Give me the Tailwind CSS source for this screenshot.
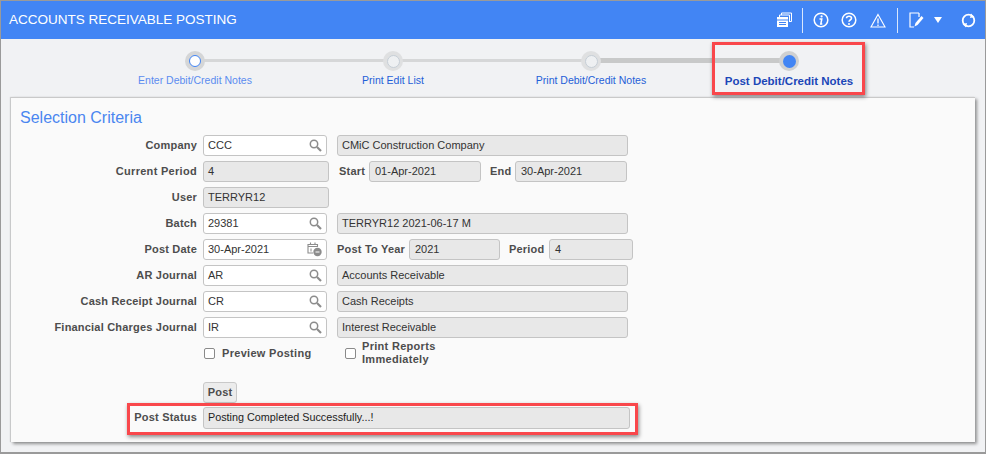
<!DOCTYPE html>
<html lang="en">
<head>
    <meta charset="UTF-8">
    <title>Accounts Receivable Posting</title>
    <script src="https://cdn.jsdelivr.net/npm/@tailwindcss/browser@4"></script>
</head>
<body class="w-[986px] h-[454px] overflow-hidden bg-[#f1f2f4] font-['Liberation_Sans',Arial,sans-serif] text-[11px] text-[#333]">
<div class="relative w-[986px] h-[454px] border border-[#9a9a9a] border-b-2">

    <!-- header -->
    <header class="h-[38px] bg-[#4285f4] flex items-center justify-between pl-[8px] pr-[9px] text-white">
        <h1 class="text-[13.5px] leading-none">ACCOUNTS RECEIVABLE POSTING</h1>
        <div class="flex items-center">
            <svg class="w-[17px] h-[16px]" viewBox="0 0 17 16" fill="none" stroke="white"><path d="M5.500 3V1h10v8.500h-2" stroke-width="1"/><path d="M3.500 5V3h10v7" stroke-width="1"/><rect x="1" y="5" width="11" height="10" fill="white" stroke="none"/><path d="M1 8h11M3 10.500h7M3 12.500h7" stroke="#4285f4"/></svg>
            <span class="w-px h-[25px] bg-white/80 ml-[9px] mr-[10px]"></span>
            <svg class="w-[16px] h-[16px]" viewBox="0 0 16 16" fill="none" stroke="white"><circle cx="8" cy="8" r="6.800" stroke-width="1.500"/><circle cx="8.600" cy="4.400" r="1.100" fill="white" stroke="none"/><path d="M6.500 7h2.300l-1 5h1.500" stroke-width="1.500"/></svg>
            <svg class="w-[16px] h-[16px] ml-[12px]" viewBox="0 0 16 16" fill="none" stroke="white"><circle cx="8" cy="8" r="6.800" stroke-width="1.500"/><path d="M5.500 6.200C5.700 3.600 10.500 3.600 10.500 6.200c0 1.800-2.500 1.800-2.500 3.600" stroke-width="1.600"/><circle cx="8" cy="11.900" r="1" fill="white" stroke="none"/></svg>
            <svg class="w-[16px] h-[15px] ml-[13px]" viewBox="0 0 16 15" fill="none" stroke="white"><path d="M8 1.500L15 14H1z" stroke-width="1.100"/><path d="M8 5.500v5M8 11.500v1.500" stroke-width="1.300"/></svg>
            <span class="w-px h-[25px] bg-white/80 ml-[11px] mr-[11px]"></span>
            <svg class="w-[16px] h-[16px]" viewBox="0 0 16 16" fill="none" stroke="white"><path d="M10 1H1v14h4M10 1v4" stroke-width="1.200"/><path d="M5.500 14.500l1-3.500 6-7 2 2-6 7z" fill="white" stroke="none"/></svg>
            <span class="w-0 h-0 ml-[9px] border-x-[4px] border-x-transparent border-t-[6px] border-t-white"></span>
            <svg class="w-[15px] h-[15px] ml-[19px]" viewBox="0 0 15 15" fill="none" stroke="white"><circle cx="7.500" cy="7.500" r="5.800" stroke-width="1.800"/><path d="M10 0.500l3.500 3.500-4.500 1zM5 14.500l-3.500-3.500 4.500-1z" fill="white" stroke="none"/></svg>
        </div>
    </header>

    <!-- stepper -->
    <nav class="relative h-[58px] pl-[95px] flex">
        <span class="absolute left-[194px] top-[20px] w-[396px] h-[3px] bg-[#d6d7d8]"></span>
        <span class="absolute left-[590px] top-[19px] w-[198px] h-[5px] bg-[#c8c9c9]"></span>
        <div class="relative w-[198px] flex flex-col items-center pt-[12px]">
            <span class="w-[20px] h-[20px] rounded-full bg-[#d5d6d7] flex items-center justify-center"><span class="w-[12px] h-[12px] rounded-full bg-white border border-[#4285f4]"></span></span>
            <span class="mt-[2px] text-[#5b8cf0] text-[10.5px]">Enter Debit/Credit Notes</span>
        </div>
        <div class="relative w-[198px] flex flex-col items-center pt-[12px]">
            <span class="w-[20px] h-[20px] rounded-full bg-[#dfe0e1] flex items-center justify-center"><span class="w-[13px] h-[13px] rounded-full bg-[#eef0f2] border border-[#c6ced6]"></span></span>
            <span class="mt-[2px] text-[#1f5fd8] text-[10.5px]">Print Edit List</span>
        </div>
        <div class="relative w-[198px] flex flex-col items-center pt-[12px]">
            <span class="w-[20px] h-[20px] rounded-full bg-[#dfe0e1] flex items-center justify-center"><span class="w-[13px] h-[13px] rounded-full bg-[#eef0f2] border border-[#c6ced6]"></span></span>
            <span class="mt-[2px] text-[#1f5fd8] text-[10.5px]">Print Debit/Credit Notes</span>
        </div>
        <div class="relative w-[198px] flex flex-col items-center pt-[12px]">
            <span class="w-[20px] h-[20px] rounded-full bg-[#cfd0d1] flex items-center justify-center"><span class="w-[13px] h-[13px] rounded-full bg-[#4285f4]"></span></span>
            <span class="mt-[2px] text-[#1c47b8] text-[11.5px] leading-[16px] font-bold">Post Debit/Credit Notes</span>
        </div>
    </nav>

    <!-- selection criteria card -->
    <main class="ml-[10px] w-[964px] h-[345px] bg-[#fafafa] border-t border-[#c9c9c9] shadow-[2px_2px_3px_rgba(0,0,0,0.4),-1px_0_1px_rgba(0,0,0,0.15)]">
        <h2 class="pl-[9px] pt-[10px] h-[37px] text-[16px] leading-[19px] text-[#4a86f0]">Selection Criteria</h2>
        <div class="flex flex-col gap-[5px]">
            <div class="flex items-center h-[21px]">
                <label class="w-[186px] text-right font-bold text-[#4d4d4d] tracking-[0.2px]">Company</label>
                <div class="ml-[6px] w-[124px] h-[21px] bg-white border border-[#c4c4c4] rounded-[3px] flex items-center justify-between pl-[4px] pr-[4px]">CCC
                    <svg class="w-[13px] h-[13px]" viewBox="0 0 13 13" fill="none" stroke="#8c8c8c"><circle cx="5" cy="5" r="3.700" stroke-width="1.500"/><path d="M8 8l4 4" stroke-width="2.200"/></svg>
                </div>
                <div class="ml-[10px] w-[291px] h-[21px] bg-[#e8e8e8] border border-[#c4c4c4] rounded-[3px] flex items-center pl-[4px]">CMiC Construction Company</div>
            </div>
            <div class="flex items-center h-[21px]">
                <label class="w-[186px] text-right font-bold text-[#4d4d4d] tracking-[0.3px]">Current Period</label>
                <div class="ml-[6px] w-[126px] h-[21px] bg-[#e8e8e8] border border-[#c4c4c4] rounded-[3px] flex items-center pl-[4px]">4</div>
                <label class="ml-[10px] w-[26px] font-bold text-[#4d4d4d] tracking-[0.2px]">Start</label>
                <div class="ml-[4px] w-[112px] h-[21px] bg-[#e8e8e8] border border-[#c4c4c4] rounded-[3px] flex items-center pl-[5px]">01-Apr-2021</div>
                <label class="ml-[9px] w-[20px] font-bold text-[#4d4d4d] tracking-[0.2px]">End</label>
                <div class="ml-[5px] w-[112px] h-[21px] bg-[#e8e8e8] border border-[#c4c4c4] rounded-[3px] flex items-center pl-[5px]">30-Apr-2021</div>
            </div>
            <div class="flex items-center h-[21px]">
                <label class="w-[186px] text-right font-bold text-[#4d4d4d] tracking-[0.2px]">User</label>
                <div class="ml-[6px] w-[126px] h-[21px] bg-[#e8e8e8] border border-[#c4c4c4] rounded-[3px] flex items-center pl-[4px]">TERRYR12</div>
            </div>
            <div class="flex items-center h-[21px]">
                <label class="w-[186px] text-right font-bold text-[#4d4d4d] tracking-[0.2px]">Batch</label>
                <div class="ml-[6px] w-[124px] h-[21px] bg-white border border-[#c4c4c4] rounded-[3px] flex items-center justify-between pl-[4px] pr-[4px]">29381
                    <svg class="w-[13px] h-[13px]" viewBox="0 0 13 13" fill="none" stroke="#8c8c8c"><circle cx="5" cy="5" r="3.700" stroke-width="1.500"/><path d="M8 8l4 4" stroke-width="2.200"/></svg>
                </div>
                <div class="ml-[10px] w-[291px] h-[21px] bg-[#e8e8e8] border border-[#c4c4c4] rounded-[3px] flex items-center pl-[4px]">TERRYR12 2021-06-17 M</div>
            </div>
            <div class="flex items-center h-[21px]">
                <label class="w-[186px] text-right font-bold text-[#4d4d4d] tracking-[0.2px]">Post Date</label>
                <div class="ml-[6px] w-[124px] h-[21px] bg-white border border-[#c4c4c4] rounded-[3px] flex items-center justify-between pl-[4px] pr-[4px]">30-Apr-2021
                    <svg class="w-[15px] h-[16px] -mt-[1px]" viewBox="0 0 15 16" fill="none" stroke="#8c8c8c"><path d="M1 3.500h9.500v2H1zM1 5.500V12h5M3.500 1.500v2M8 1.500v2" stroke-width="1.100"/><path d="M4 7.500v3" stroke-width="1"/><circle cx="10.500" cy="11" r="4.200" fill="#8c8c8c" stroke="none"/><path d="M8.500 11h4" stroke="white"/></svg>
                </div>
                <label class="ml-[10px] w-[66px] whitespace-nowrap font-bold text-[#4d4d4d] tracking-[0.2px]">Post To Year</label>
                <div class="ml-[6px] w-[91px] h-[21px] bg-[#e8e8e8] border border-[#c4c4c4] rounded-[3px] flex items-center pl-[5px]">2021</div>
                <label class="ml-[9px] w-[35px] font-bold text-[#4d4d4d] tracking-[0.2px]">Period</label>
                <div class="ml-[5px] w-[84px] h-[21px] bg-[#e8e8e8] border border-[#c4c4c4] rounded-[3px] flex items-center pl-[5px]">4</div>
            </div>
            <div class="flex items-center h-[21px]">
                <label class="w-[186px] text-right font-bold text-[#4d4d4d] tracking-[0.2px]">AR Journal</label>
                <div class="ml-[6px] w-[124px] h-[21px] bg-white border border-[#c4c4c4] rounded-[3px] flex items-center justify-between pl-[4px] pr-[4px]">AR
                    <svg class="w-[13px] h-[13px]" viewBox="0 0 13 13" fill="none" stroke="#8c8c8c"><circle cx="5" cy="5" r="3.700" stroke-width="1.500"/><path d="M8 8l4 4" stroke-width="2.200"/></svg>
                </div>
                <div class="ml-[10px] w-[291px] h-[21px] bg-[#e8e8e8] border border-[#c4c4c4] rounded-[3px] flex items-center pl-[4px]">Accounts Receivable</div>
            </div>
            <div class="flex items-center h-[21px]">
                <label class="w-[186px] text-right font-bold text-[#4d4d4d] tracking-[0.2px]">Cash Receipt Journal</label>
                <div class="ml-[6px] w-[124px] h-[21px] bg-white border border-[#c4c4c4] rounded-[3px] flex items-center justify-between pl-[4px] pr-[4px]">CR
                    <svg class="w-[13px] h-[13px]" viewBox="0 0 13 13" fill="none" stroke="#8c8c8c"><circle cx="5" cy="5" r="3.700" stroke-width="1.500"/><path d="M8 8l4 4" stroke-width="2.200"/></svg>
                </div>
                <div class="ml-[10px] w-[291px] h-[21px] bg-[#e8e8e8] border border-[#c4c4c4] rounded-[3px] flex items-center pl-[4px]">Cash Receipts</div>
            </div>
            <div class="flex items-center h-[21px]">
                <label class="w-[186px] text-right font-bold text-[#4d4d4d] tracking-[0.2px]">Financial Charges Journal</label>
                <div class="ml-[6px] w-[124px] h-[21px] bg-white border border-[#c4c4c4] rounded-[3px] flex items-center justify-between pl-[4px] pr-[4px]">IR
                    <svg class="w-[13px] h-[13px]" viewBox="0 0 13 13" fill="none" stroke="#8c8c8c"><circle cx="5" cy="5" r="3.700" stroke-width="1.500"/><path d="M8 8l4 4" stroke-width="2.200"/></svg>
                </div>
                <div class="ml-[10px] w-[291px] h-[21px] bg-[#e8e8e8] border border-[#c4c4c4] rounded-[3px] flex items-center pl-[4px]">Interest Receivable</div>
            </div>
            <!-- checkboxes -->
            <div class="flex items-center h-[26px] pl-[193px] -mt-[3px] font-bold text-[#4d4d4d] tracking-[0.3px]">
                <span class="w-[11px] h-[11px] bg-white border border-[#8a8a8a] rounded-[2px] mt-[1px]"></span>
                <span class="ml-[7px] w-[123px]">Preview Posting</span>
                <span class="w-[11px] h-[11px] bg-white border border-[#8a8a8a] rounded-[2px] mt-[1px]"></span>
                <span class="ml-[6px] leading-[13px]">Print Reports<br>Immediately</span>
            </div>
            <div class="pl-[192px] mt-[11px]">
                <button class="block h-[21px] w-[34px] bg-[#ececec] border border-[#c9c9c9] rounded-[3px] font-bold text-[#4d4d4d] tracking-[0.2px]">Post</button>
            </div>
            <div class="flex items-center h-[21px] -mt-[1px]">
                <label class="w-[186px] text-right font-bold text-[#4d4d4d] tracking-[0.2px]">Post Status</label>
                <div class="ml-[6px] w-[427px] h-[22px] bg-[#e8e8e8] border border-[#c4c4c4] rounded-[3px] flex items-center pl-[4px] text-[#222] text-[10.8px]">Posting Completed Successfully...!</div>
            </div>
        </div>
    </main>

    <!-- red annotation boxes -->
    <div class="absolute left-[711px] top-[41px] w-[153px] h-[53px] border-[3px] border-[#f9474b] shadow-[1px_2px_4px_rgba(0,0,0,0.45)]"></div>
    <div class="absolute left-[126px] top-[402px] w-[511px] h-[32px] border-[3px] border-[#f9474b] shadow-[1px_2px_4px_rgba(0,0,0,0.45)]"></div>
</div>
</body>
</html>
